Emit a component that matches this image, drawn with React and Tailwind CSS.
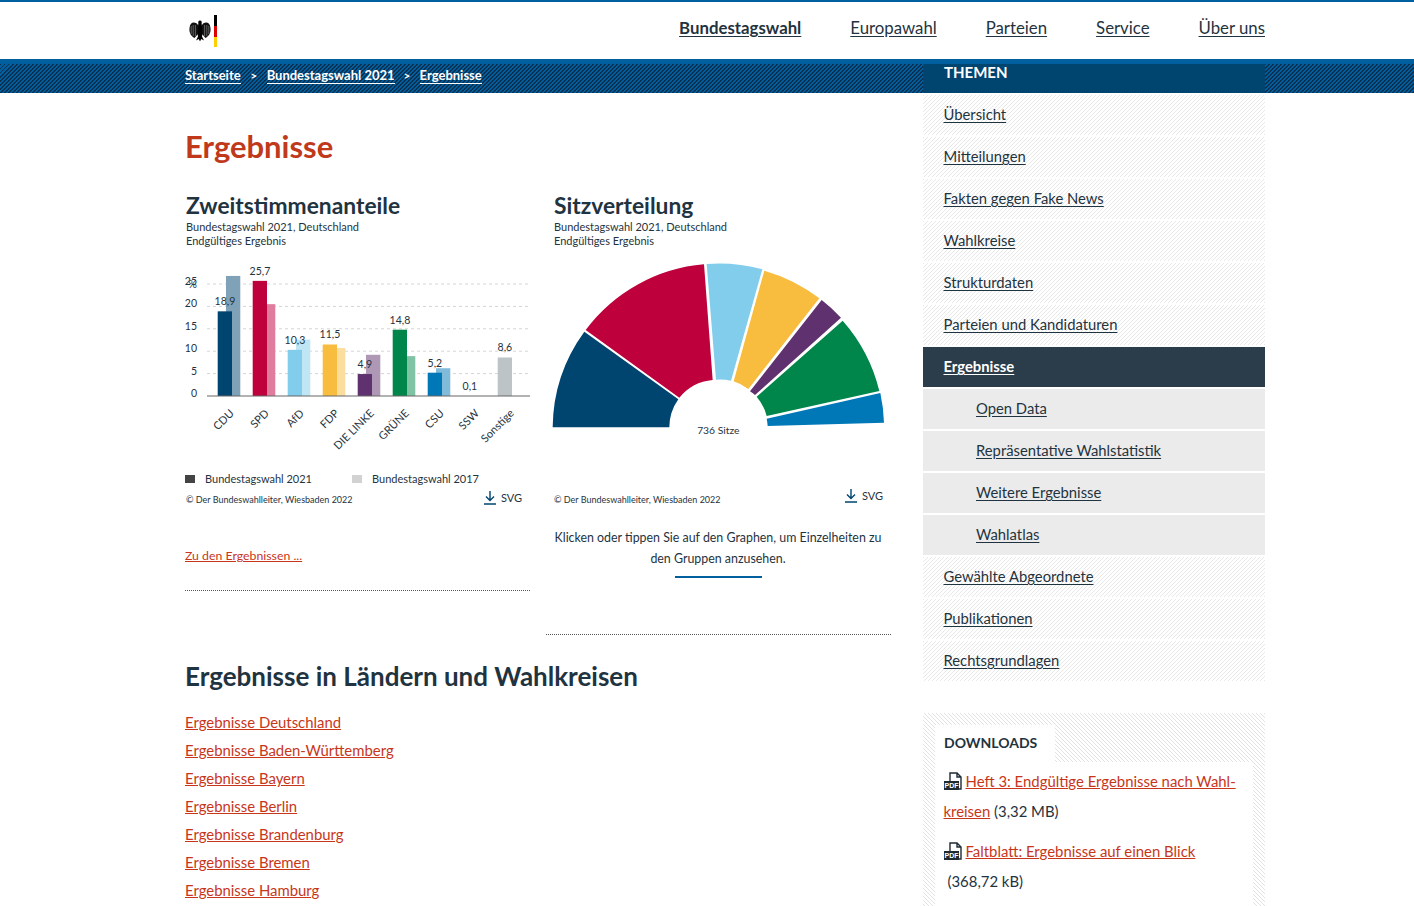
import React from "react";

const topNav = [
  { label: "Bundestagswahl", active: true },
  { label: "Europawahl" },
  { label: "Parteien" },
  { label: "Service" },
  { label: "Über uns" },
];

const sideNav = [
  { label: "Übersicht" },
  { label: "Mitteilungen" },
  { label: "Fakten gegen Fake News" },
  { label: "Wahlkreise" },
  { label: "Strukturdaten" },
  { label: "Parteien und Kandidaturen" },
  { label: "Ergebnisse", active: true },
  { label: "Open Data", sub: true },
  { label: "Repräsentative Wahlstatistik", sub: true },
  { label: "Weitere Ergebnisse", sub: true },
  { label: "Wahlatlas", sub: true },
  { label: "Gewählte Abgeordnete" },
  { label: "Publikationen" },
  { label: "Rechtsgrundlagen" },
];

const laender = [
  "Ergebnisse Deutschland",
  "Ergebnisse Baden-Württemberg",
  "Ergebnisse Bayern",
  "Ergebnisse Berlin",
  "Ergebnisse Brandenburg",
  "Ergebnisse Bremen",
  "Ergebnisse Hamburg",
];

const bars = [
  { name: "CDU", v21: 18.9, v17: 26.8, color: "#004570", light: "#7fa2b8", label: "18,9" },
  { name: "SPD", v21: 25.7, v17: 20.5, color: "#be003c", light: "#e07d9e", label: "25,7" },
  { name: "AfD", v21: 10.3, v17: 12.6, color: "#82cdec", light: "#c0e6f5", label: "10,3" },
  { name: "FDP", v21: 11.5, v17: 10.7, color: "#f8bc3e", light: "#fbdd9e", label: "11,5" },
  { name: "DIE LINKE", v21: 4.9, v17: 9.2, color: "#5f316e", light: "#af98b6", label: "4,9" },
  { name: "GRÜNE", v21: 14.8, v17: 8.9, color: "#00854a", light: "#80c2a4", label: "14,8" },
  { name: "CSU", v21: 5.2, v17: 6.2, color: "#0077b6", light: "#80bbda", label: "5,2" },
  { name: "SSW", v21: 0, v17: 0, color: "#003c91", light: "#80bbda", label: "0,1" },
  { name: "Sonstige", v21: 8.6, v17: 0, color: "#bcc4c7", light: "#dde1e3", label: "8,6" },
];

// ecken der segmente aus dem screenshot gemessen (3x koordinaten)
const seats = [
  { color: "#004570", d: "M23 517 A495 495 0 0 1 118 230 L400 433 A147 147 0 0 0 373 517 Z" },
  { color: "#be003c", d: "M122 225 A495 495 0 0 1 477 28 L503 375 A147 147 0 0 0 403 428 Z" },
  { color: "#82cdec", d: "M485 27 A495 495 0 0 1 652 43 L558 377 A147 147 0 0 0 513 374 Z" },
  { color: "#f8bc3e", d: "M658 47 A495 495 0 0 1 823 130 L610 402 A147 147 0 0 0 566 379 Z" },
  { color: "#5f316e", d: "M830 135 A495 495 0 0 1 888 188 L630 420 A147 147 0 0 0 615 409 Z" },
  { color: "#00854a", d: "M893 197 A495 495 0 0 1 1003 408 L665 483 A147 147 0 0 0 635 425 Z" },
  { color: "#0077b6", d: "M1006 414 A495 495 0 0 1 1017 503 L668 513 A147 147 0 0 0 665 491 Z" },
];

const Y0 = 396;
const PX = 4.48;

function Logo() {
  return (
    <div className="ml-[4px] flex items-center gap-[3px]">
      <svg width="22" height="22" viewBox="0 0 22 22">
        <path d="M9 5 C6 1 1 2 0.5 8 C0 13 2 16 5.5 18 L9 14 Z" fill="#111" />
        <path d="M13 5 C16 1 21 2 21.5 8 C22 13 20 16 16.5 18 L13 14 Z" fill="#111" />
        <g stroke="#fff" strokeWidth="0.45" opacity="0.75">
          <path d="M2.2 6 V14 M4.2 5 V16 M6.4 5 V16 M15.6 5 V16 M17.8 5 V16 M19.8 6 V14" />
        </g>
        <path d="M11 0.5 C9.3 0.5 9 2 9.4 3.4 L9 6 L8.5 14 L9 16.5 L7 20.5 L9.8 19 L11 21.5 L12.2 19 L15 20.5 L13 16.5 L13.5 14 L13 6 L12.6 3.4 C13 2 12.7 0.5 11 0.5 Z" fill="#000" />
      </svg>
      <div className="flex w-[3px] flex-col">
        <div className="h-[11px] bg-black" />
        <div className="h-[11px] bg-[#dd0000]" />
        <div className="h-[10px] bg-[#ffce00]" />
      </div>
    </div>
  );
}

function DownloadLink() {
  return (
    <span className="flex items-center gap-[5px] text-[11px] text-[#1f3340]">
      <svg width="12" height="14" viewBox="0 0 12 14" fill="none" stroke="#004570" strokeWidth="1.4">
        <path d="M6 0 V9 M2 5.5 L6 9.5 L10 5.5 M0 13 H12" />
      </svg>
      SVG
    </span>
  );
}

function PdfIcon() {
  return (
    <svg width="19" height="19" viewBox="0 0 19 19" className="mr-[3px] inline-block align-[-4px]">
      <path d="M6 1 H13 L17 5 V17 H6 Z M13 1 V5 H17" fill="#fff" stroke="#1f2a33" strokeWidth="1.4" />
      <rect x="0" y="9" width="15" height="9" fill="#1f2a33" />
      <text x="7.5" y="16.2" textAnchor="middle" fontSize="7" fontWeight="700" fill="#fff" fontFamily="Liberation Sans">PDF</text>
    </svg>
  );
}

function BarChart() {
  return (
    <svg width="346" height="200" viewBox="185 262 346 200" fontFamily="Lato, sans-serif" className="block">
      {[5, 10, 15, 20, 25].map((t) => (
        <line key={t} x1="207" x2="530" y1={Y0 - t * PX} y2={Y0 - t * PX} stroke="#d5d5d5" strokeDasharray="3 3" />
      ))}
      {[0, 5, 10, 15, 20, 25].map((t) => (
        <text key={t} x="197" y={Y0 - t * PX + 1} textAnchor="end" fontSize="10.5" fill="#1f3340">{t}</text>
      ))}
      <text x="197" y="288" textAnchor="end" fontSize="10.5" fill="#1f3340">%</text>
      {bars.map((b, i) => {
        const x = 217.7 + i * 35;
        return (
          <g key={b.name}>
            {b.v17 > 0 && <rect x={x + 8.3} y={Y0 - b.v17 * PX} width="14.3" height={b.v17 * PX} fill={b.light} />}
            {b.v21 > 0 && <rect x={x} y={Y0 - b.v21 * PX} width="14.3" height={b.v21 * PX} fill={b.color} />}
            <text x={x + 7.2} y={Y0 - b.v21 * PX - 6} textAnchor="middle" fontSize="10.5" fill="#1f3340">{b.label}</text>
            <text
              x={x + 17}
              y="414"
              textAnchor="end"
              fontSize="11"
              fill="#1f3340"
              transform={`rotate(-45 ${x + 17} 414)`}
            >
              {b.name}
            </text>
          </g>
        );
      })}
      <line x1="207" x2="530" y1={Y0} y2={Y0} stroke="#666" />
    </svg>
  );
}

function SeatChart() {
  return (
    <svg width="350" height="190" viewBox="0 0 1050 570" className="block">
      {seats.map((s) => (
        <path key={s.color} d={s.d} fill={s.color} />
      ))}
      <text x="520" y="536" textAnchor="middle" fontSize="31" fill="#1f3340" fontFamily="Lato, sans-serif">736 Sitze</text>
    </svg>
  );
}

export default function App() {
  return (
    <div className="h-[906px] overflow-hidden bg-white font-['Lato',sans-serif] text-[#1f3340]">
      {/* Header */}
      <header className="h-[59px] border-t-2 border-[#005f9f]">
        <div className="ml-[185px] flex h-full w-[1080px] items-center justify-between">
          <Logo />
          <nav className="mb-[6px] flex gap-[49px] text-[16.8px]">
            {topNav.map((item) => (
              <a key={item.label} className={item.active ? "font-bold underline underline-offset-2" : "underline underline-offset-2"}>
                {item.label}
              </a>
            ))}
          </nav>
        </div>
      </header>

      {/* Breadcrumb */}
      <div className="h-[34px] border-t-[5px] border-[#005f9f] bg-[repeating-linear-gradient(135deg,#0d3050_0,#0d3050_1.41px,#005f9f_1.41px,#005f9f_2.83px)]">
        <div className="ml-[185px] flex h-[24px] w-[1080px] items-center text-[13px] font-bold text-white">
          <a className="border-b border-white leading-[15px]">Startseite</a>
          <span className="mx-[9.5px] text-xs">&gt;</span>
          <a className="border-b border-white leading-[15px]">Bundestagswahl 2021</a>
          <span className="mx-[9px] text-xs">&gt;</span>
          <a className="border-b border-white leading-[15px]">Ergebnisse</a>
        </div>
      </div>

      <div className="ml-[185px] flex w-[1080px] gap-[32px]">
        <main className="w-[706px]">
          <h1 className="mt-[33px] text-[31px] font-bold leading-[40px] text-[#c0391b]">Ergebnisse</h1>

          <div className="flex">
            <section className="h-[424px] w-[346px]">
              <h2 className="mb-px ml-px mt-[25px] text-[22.8px] font-bold leading-[28px]">Zweitstimmenanteile</h2>
              <p className="ml-px text-[11px] leading-[14px]">Bundestagswahl 2021, Deutschland</p>
              <p className="ml-px text-[11px] leading-[14px]">Endgültiges Ergebnis</p>
              <div className="mt-[14px]">
                <BarChart />
              </div>
              <div className="mt-[10px] flex items-center text-[11px] leading-[14px]">
                <span className="h-[8px] w-[10px] bg-[#444]" />
                <span className="ml-[10px] w-[147px]">Bundestagswahl 2021</span>
                <span className="h-[8px] w-[10px] bg-[#d2d2d2]" />
                <span className="ml-[10px]">Bundestagswahl 2017</span>
              </div>
              <div className="mt-[4px] flex items-start justify-between pr-[9px]">
                <span className="ml-px mt-[3px] text-[9px] leading-[14px]">© Der Bundeswahlleiter, Wiesbaden 2022</span>
                <DownloadLink />
              </div>
              <div className="mt-[40px] text-[12.3px] leading-[18px] text-[#c8361a] underline">
                Zu den Ergebnissen ...
              </div>
              <div className="mt-[25px] w-[345px] border-b border-dotted border-[#555]" />
            </section>

            <section className="ml-[15px] w-[345px]">
              <div className="pl-[8px]">
                <h2 className="mb-px mt-[25px] text-[22.8px] font-bold leading-[28px]">Sitzverteilung</h2>
                <p className="text-[11px] leading-[14px]">Bundestagswahl 2021, Deutschland</p>
                <p className="text-[11px] leading-[14px]">Endgültiges Ergebnis</p>
              </div>
              <div className="-ml-px mt-[7px]">
                <SeatChart />
              </div>
              <div className="mt-[43px] flex items-start justify-between pl-[8px] pr-[8px]">
                <span className="mt-[5px] text-[9px] leading-[14px]">© Der Bundeswahlleiter, Wiesbaden 2022</span>
                <DownloadLink />
              </div>
              <p className="mt-[20px] whitespace-nowrap pl-[8px] pr-[9px] text-center text-[12.4px] leading-[21px]">
                Klicken oder tippen Sie auf den Graphen, um Einzelheiten zu
                <br />
                den Gruppen anzusehen.
              </p>
              <div className="ml-[129px] mt-[7px] h-[2px] w-[87px] bg-[#005f9f]" />
              <div className="mt-[56px] border-b border-dotted border-[#555]" />
            </section>
          </div>

          <h2 className="mt-[24px] text-[26px] font-bold leading-[34px]">Ergebnisse in Ländern und Wahlkreisen</h2>
          <ul className="mt-[15px] text-[14.9px] leading-[28px] text-[#c8361a]">
            {laender.map((item) => (
              <li key={item}>
                <a className="underline">{item}</a>
              </li>
            ))}
          </ul>
        </main>

        {/* Sidebar */}
        <aside className="-mt-[29px] w-[342px]">
          <div className="h-[29px] bg-[#004570] pl-[21px] text-[15px] font-bold uppercase leading-[17px] text-white">
            Themen
          </div>
          <div className="mt-[2px] flex flex-col gap-[2px]">
            {sideNav.map((item) => {
              let cls = "bg-[repeating-linear-gradient(135deg,#e8e8e8_0,#e8e8e8_1px,#ffffff_1px,#ffffff_2.83px)] pl-[20.5px]";
              if (item.active) cls = "bg-[#2b3c4b] pl-[20.5px] font-bold text-white";
              if (item.sub) cls = "bg-[#ebebeb] pl-[53px]";
              return (
                <div key={item.label} className={`flex h-[40px] items-center pb-[2px] text-[14.8px] ${cls}`}>
                  <a className="underline underline-offset-2">{item.label}</a>
                </div>
              );
            })}
          </div>

          <div className="mt-[32px] h-[300px] bg-[repeating-linear-gradient(45deg,#e2e2e2_0,#e2e2e2_1px,#ffffff_1px,#ffffff_2.83px)] px-[12px] pt-[12px]">
            <div className="flex h-[37px] w-[120px] items-center bg-white pb-[2px] pl-[9px] text-[14px] font-bold">DOWNLOADS</div>
            <div className="h-[260px] bg-white pl-[8.5px] pr-[8px] pt-[4px] text-[14.9px] leading-[30px]">
              <p>
                <PdfIcon />
                <a className="text-[#c8361a] underline">
                  Heft 3: Endgültige Ergebnisse nach Wahl-
                  <br />
                  kreisen
                </a>{" "}
                (3,32 MB)
              </p>
              <p className="mt-[10px]">
                <PdfIcon />
                <a className="text-[#c8361a] underline">Faltblatt: Ergebnisse auf einen Blick</a>
              </p>
              <p className="pl-[4px]">(368,72 kB)</p>
            </div>
          </div>
        </aside>
      </div>
    </div>
  );
}
